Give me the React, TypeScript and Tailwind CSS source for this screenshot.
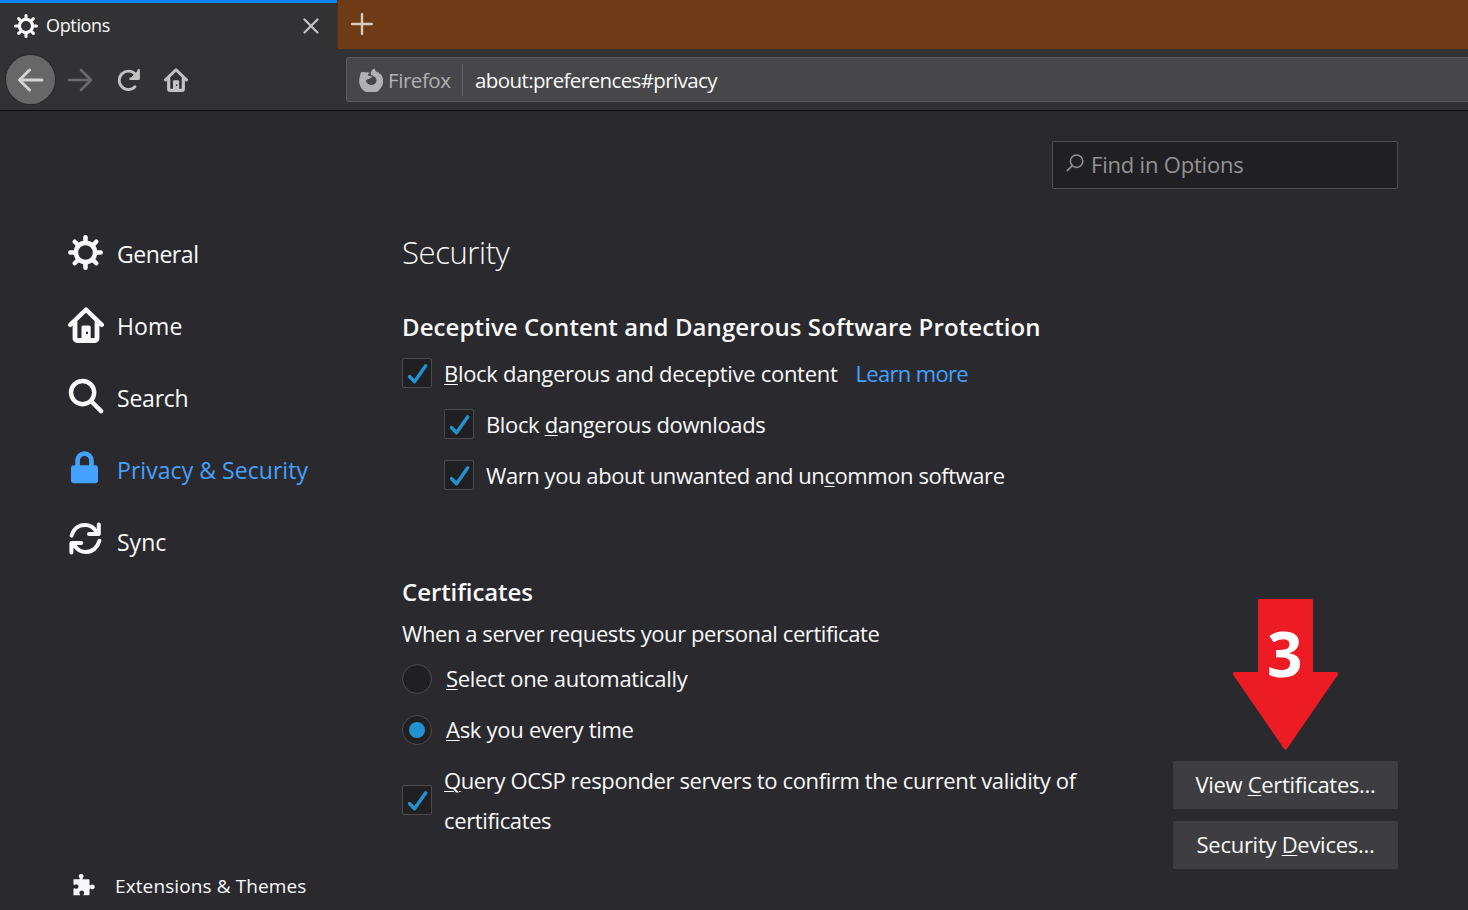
import type { ReactNode } from 'react';

function Gear({ className }: { className: string }) {
  return (
    <svg viewBox="0 0 34 34" className={className} fill="none" stroke="currentColor" strokeLinecap="round">
      <circle cx="17" cy="17" r="9.3" strokeWidth="4.5" />
      {[0, 45, 90, 135, 180, 225, 270, 315].map((a) => (
        <path key={a} d="M17 7V2.200" strokeWidth="4.400" transform={`rotate(${a} 17 17)`} />
      ))}
    </svg>
  );
}

function House({ className }: { className: string }) {
  return (
    <svg viewBox="0 0 36 36" className={className} fill="none" stroke="currentColor" strokeLinecap="round" strokeLinejoin="round">
      <path d="M2.200 17.800 18 2.600 33.800 17.800" strokeWidth="4.400" />
      <path d="M7 15v16.500a2 2 0 0 0 2 2h18a2 2 0 0 0 2-2V15" strokeWidth="4.800" />
      <path fillRule="evenodd" d="M13.500 34V20a1.600 1.600 0 0 1 1.600-1.600h6a1.600 1.600 0 0 1 1.600 1.600v14zM18 24.800v2.200h2v-2.200z" fill="currentColor" stroke="none" />
    </svg>
  );
}

function Magnifier({ className }: { className: string }) {
  return (
    <svg viewBox="0 0 36 36" className={className} fill="none" stroke="currentColor" strokeLinecap="round">
      <circle cx="14.600" cy="14.600" r="11.600" strokeWidth="4.400" />
      <path d="m23.500 23.500 9.600 9.600" strokeWidth="4.400" />
    </svg>
  );
}

function Lock({ className }: { className: string }) {
  return (
    <svg viewBox="0 0 36 36" className={className}>
      <path d="M7.200 17v-5.500a9.300 9.300 0 0 1 18.600 0V17h-4.700v-5.500a4.600 4.600 0 0 0-9.200 0V17z" fill="currentColor" />
      <rect x="3" y="16.200" width="27" height="18" rx="3" fill="currentColor" />
    </svg>
  );
}

function SyncArrows({ className }: { className: string }) {
  return (
    <svg viewBox="0 0 34 34" className={className} fill="none" stroke="currentColor" strokeLinecap="round" strokeLinejoin="round" strokeWidth="4">
      <path d="M3.600 14.600C5.300 8.200 10.200 4 17 4c4.600 0 8.600 2.400 10.800 6" />
      <path d="M30.800 3.400v9.600H21" />
      <path d="m30 8-5 5h5z" fill="currentColor" strokeWidth="2" />
      <path d="M31.400 19.800C29.700 26.400 24.500 31 17.800 31c-4.600 0-8.600-2.400-10.800-6" />
      <path d="M3.400 31.600V22H13.200" />
      <path d="m4.200 27 5-5h-5z" fill="currentColor" strokeWidth="2" />
    </svg>
  );
}

function Puzzle({ className }: { className: string }) {
  return (
    <svg viewBox="0 0 22 22" className={className} fill="currentColor">
      <path d="M.5 5.300h5.700c.7 0 .7-.9.300-1.500a2.300 2.300 0 1 1 3.300 0c-.4.600-.4 1.500.3 1.500h5.400a1 1 0 0 1 1 1v4.400c0 .8.800.8 1.400.400a2.300 2.300 0 1 1 0 3.600c-.6-.4-1.400-.4-1.400.4v5.200a1 1 0 0 1-1 1h-4.400c-.9 0-.8-.8-.4-1.300a2.300 2.300 0 1 0-3.900 0c.4.500.4 1.300-.4 1.300H.500v-6.400c0-.9.900-.9 1.500-.5a2.200 2.200 0 1 0 0-3.700c-.6.400-1.500.300-1.500-.6z" />
    </svg>
  );
}

function FirefoxMark({ className }: { className: string }) {
  return (
    <svg viewBox="0 0 24 24" className={className} fill="currentColor">
      <path d="M15.400.300c.2 1.900 1.400 2.900 2.700 4l1.300-.3c.3.900.8 1.500 1.500 2.200.400-.3.700-.4.900-.2A12 12 0 1 1 .600 9.800C.900 7.800 1.500 5.900 2.200 3.500c.3.500.5.900.9 1.100l1.200-.9c1.200.5 2.200.6 3.500.7 1.200-.2 2.300.1 3 .6-1.500.6-2.200 1.900-1.700 2.600.7.500 2.500.300 3.800.8-.2 1.300-1.800 1.600-2.600 2.300-.5.300-1 .7-1.700.5-.8.200-1.300.9-1.600 1.700.7 2.900 3.300 4.300 5.700 4.100 3-.3 5-2.300 4.900-5-.1-1.700-1.300-3-2.700-3.600-1.500-.7-3-1.200-3.100-2.600-.2-1.800 1.400-4.500 3.600-5.500z" />
    </svg>
  );
}

function Checkbox() {
  return (
    <span className="flex size-[30px] shrink-0 rounded-[2px] border border-[#4b4b4d] bg-[#202022]">
      <svg viewBox="0 0 28 28" className="size-7" fill="none" stroke="#2292d0" strokeWidth="3.4" strokeLinecap="round" strokeLinejoin="round">
        <path d="m6.500 17.500 5 5.200L22.700 6.800" />
      </svg>
    </span>
  );
}

function Radio({ checked = false }: { checked?: boolean }) {
  return (
    <span className="flex size-[30px] shrink-0 items-center justify-center rounded-full border border-[#4b4b4d] bg-[#202022]">
      {checked && <span className="size-4 rounded-full bg-[#2292d0]" />}
    </span>
  );
}

function Key({ children }: { children: ReactNode }) {
  return <span className="underline decoration-1 underline-offset-[2px]">{children}</span>;
}

function NavItem({ icon, active = false, children }: { icon: ReactNode; active?: boolean; children: ReactNode }) {
  return (
    <a className={`flex h-[72px] items-center gap-[13px] text-[23px] ${active ? 'text-[#45a1ff]' : 'text-[#f9f9fa]'}`}>
      {icon}
      {children}
    </a>
  );
}

export default function App() {
  return (
    <div className="flex h-[910px] w-[1468px] flex-col overflow-hidden bg-[#2a2a2e] font-['Open_Sans',sans-serif] text-[#f9f9fa]">
      <header className="h-[111px] shrink-0 border-b border-[#0c0c0d] bg-[#323234]">
        <div className="flex h-[49px]">
          <div className="flex w-[337px] items-center border-t-[3px] border-[#0a84ff] pl-[14px] pr-[18px]">
            <Gear className="size-6" />
            <span className="mb-[2px] ml-2 flex-1 text-[18px] tracking-[-0.35px]">Options</span>
            <svg viewBox="0 0 16 16" className="size-4 text-[#c5c5c6]" fill="none" stroke="currentColor" strokeWidth="2.200" strokeLinecap="round">
              <path d="m1.500 1.500 13 13m0-13-13 13" />
            </svg>
          </div>
          <div className="flex flex-1 border-l border-[#52300f] bg-[#6f3a16] pl-[13px] pt-[13px]">
            <svg viewBox="0 0 22 22" className="size-[22px] text-[#d9c9be]" fill="none" stroke="currentColor" strokeWidth="2.400" strokeLinecap="round">
              <path d="M11 1.200v19.600M1.200 11h19.600" />
            </svg>
          </div>
        </div>
        <div className="flex h-[61px] items-center pl-[6px] text-[#c2c2c3]">
          <span className="flex size-[49px] items-center justify-center rounded-full bg-[#676768] text-[#d4d4d5] ring-1 ring-[#29292b]">
            <svg viewBox="0 0 26 24" className="h-6 w-[26px]" fill="none" stroke="currentColor" strokeWidth="3" strokeLinecap="round" strokeLinejoin="round">
              <path d="M24 12H1.800M11.500 2l-10 10 10 10" />
            </svg>
          </span>
          <svg viewBox="0 0 26 24" className="ml-3 h-6 w-[26px] text-[#6b6b6d]" fill="none" stroke="currentColor" strokeWidth="2.700" strokeLinecap="round" strokeLinejoin="round">
            <path d="M2 12h22M14 2l10 10-10 10" />
          </svg>
          <svg viewBox="0 0 24 24" className="ml-6 size-6" fill="none" stroke="currentColor" strokeWidth="2.800" strokeLinecap="round" strokeLinejoin="round">
            <path d="M18 18.800A9.200 9.200 0 1 1 18.300 6.200" />
            <path d="M21.500 3v7.500H14z" fill="currentColor" strokeWidth="1" />
            <path d="M21.600 2.400v8.400h-8.100" strokeWidth="2.600" />
          </svg>
          <House className="ml-[23px] size-6" />
          <div className="ml-[158px] flex h-[45px] flex-1 items-center rounded-l-[3px] border border-r-0 border-[#5b5b5d] bg-[#474749] pl-3 text-[20.5px] text-[#b1b1b3]">
            <FirefoxMark className="size-6" />
            <span className="ml-[5px] mt-[2px] w-[62px] tracking-[-0.44px]">Firefox</span>
            <span className="ml-3 h-8 w-px bg-[#66676e]" />
            <span className="ml-3 mt-[2px] tracking-[-0.6px] text-[#f9f9fa]">about:preferences#privacy</span>
          </div>
        </div>
      </header>

      <div className="flex flex-1">
        <nav className="flex w-[402px] flex-col pl-[67px] pt-[107px]">
          <NavItem icon={<Gear className="mx-[1px] mb-[3px] size-[35px]" />}>
            <span className="tracking-[-0.45px]">General</span>
          </NavItem>
          <NavItem icon={<House className="mb-[3px] ml-px size-9" />}>
            <span className="-ml-px tracking-[0.1px] pl-px">Home</span>
          </NavItem>
          <NavItem icon={<Magnifier className="mb-[4px] ml-px size-9" />}>
            <span className="tracking-[-0.22px]">Search</span>
          </NavItem>
          <NavItem active icon={<Lock className="mb-[6px] ml-px size-9" />}>
            <span className="tracking-[0.05px]">Privacy &amp; Security</span>
          </NavItem>
          <NavItem icon={<SyncArrows className="mb-[8px] ml-px mr-[2px] size-[34px]" />}>
            <span className="tracking-[0px]">Sync</span>
          </NavItem>
          <a className="mt-[294px] flex items-center gap-5 pl-[6px] text-[19px] leading-[28px] tracking-[0.11px]">
            <Puzzle className="mb-[2px] size-[22px]" />
            Extensions &amp; Themes
          </a>
        </nav>

        <main className="flex w-[996px] flex-col pt-[30px] text-[22px] leading-10">
          <div className="flex h-12 w-[346px] items-center self-end rounded-[2px] border border-[#4f4f51] bg-[#202022] pl-[13px] text-[#939395]">
            <svg viewBox="0 0 18 18" className="mb-1 size-[18px]" fill="none" stroke="currentColor" strokeWidth="1.500">
              <circle cx="10.600" cy="7.200" r="6.200" />
              <path d="m6.300 11.600-5.500 5.500" />
            </svg>
            <span className="mb-[2px] ml-[7px] tracking-[-0.2px]">Find in Options</span>
          </div>
          <h1 className="mt-[43px] text-[31px] leading-10 font-light tracking-[-0.4px]">Security</h1>
          <h2 className="mt-[35px] text-2xl leading-10 font-semibold tracking-[0.09px]">Deceptive Content and Dangerous Software Protection</h2>
          <label className="flex h-[51px] items-center gap-3">
            <Checkbox />
            <span className="tracking-[-0.3px]"><Key>B</Key>lock dangerous and deceptive content</span>
            <a className="ml-[6px] tracking-[-0.66px] text-[#45a1ff]">Learn more</a>
          </label>
          <label className="ml-[42px] flex h-[51px] items-center gap-3">
            <Checkbox />
            <span className="tracking-[-0.36px]">Block <Key>d</Key>angerous downloads</span>
          </label>
          <label className="ml-[42px] flex h-[51px] items-center gap-3">
            <Checkbox />
            <span className="tracking-[-0.425px]">Warn you about unwanted and un<Key>c</Key>ommon software</span>
          </label>
          <h2 className="mt-[72px] text-2xl leading-10 font-semibold tracking-[-0.08px]">Certificates</h2>
          <p className="h-[41px] leading-[42px] tracking-[-0.42px]">When a server requests your personal certificate</p>
          <label className="flex h-[51px] items-center gap-[14px]">
            <Radio />
            <span className="mb-[2px] tracking-[-0.31px]"><Key>S</Key>elect one automatically</span>
          </label>
          <label className="flex h-[51px] items-center gap-[14px]">
            <Radio checked />
            <span className="mb-[2px] tracking-[-0.28px]"><Key>A</Key>sk you every time</span>
          </label>
          <div className="mt-[6px] flex items-start justify-between">
            <label className="-mt-px flex items-center gap-3">
              <Checkbox />
              <span className="w-[660px] tracking-[-0.37px]">
                <Key>Q</Key>uery OCSP responder servers to confirm the current validity of certificates
              </span>
            </label>
            <div className="relative flex w-[225px] flex-col gap-3">
              <div className="absolute -top-[162px] left-[60px] h-[151px] w-[106px]">
                <svg viewBox="0 0 106 151" className="h-[151px] w-[106px]">
                  <path d="M26 0h53l1 1v72h24q2 1 0 4L54.500 149q-2 3-4 0L1 77q-2-3 0-4h24V1z" fill="#ed1c24" />
                </svg>
                <span className="absolute left-[34px] top-[22px] text-[62px] leading-[64px] font-bold text-white">3</span>
              </div>
              <button className="h-12 rounded-[2px] bg-[#3e3e40] pb-[2px] tracking-[-0.3px]">View <Key>C</Key>ertificates...</button>
              <button className="h-12 rounded-[2px] bg-[#3e3e40] pb-[2px] tracking-[-0.28px]">Security <Key>D</Key>evices...</button>
            </div>
          </div>
        </main>
      </div>
    </div>
  );
}
